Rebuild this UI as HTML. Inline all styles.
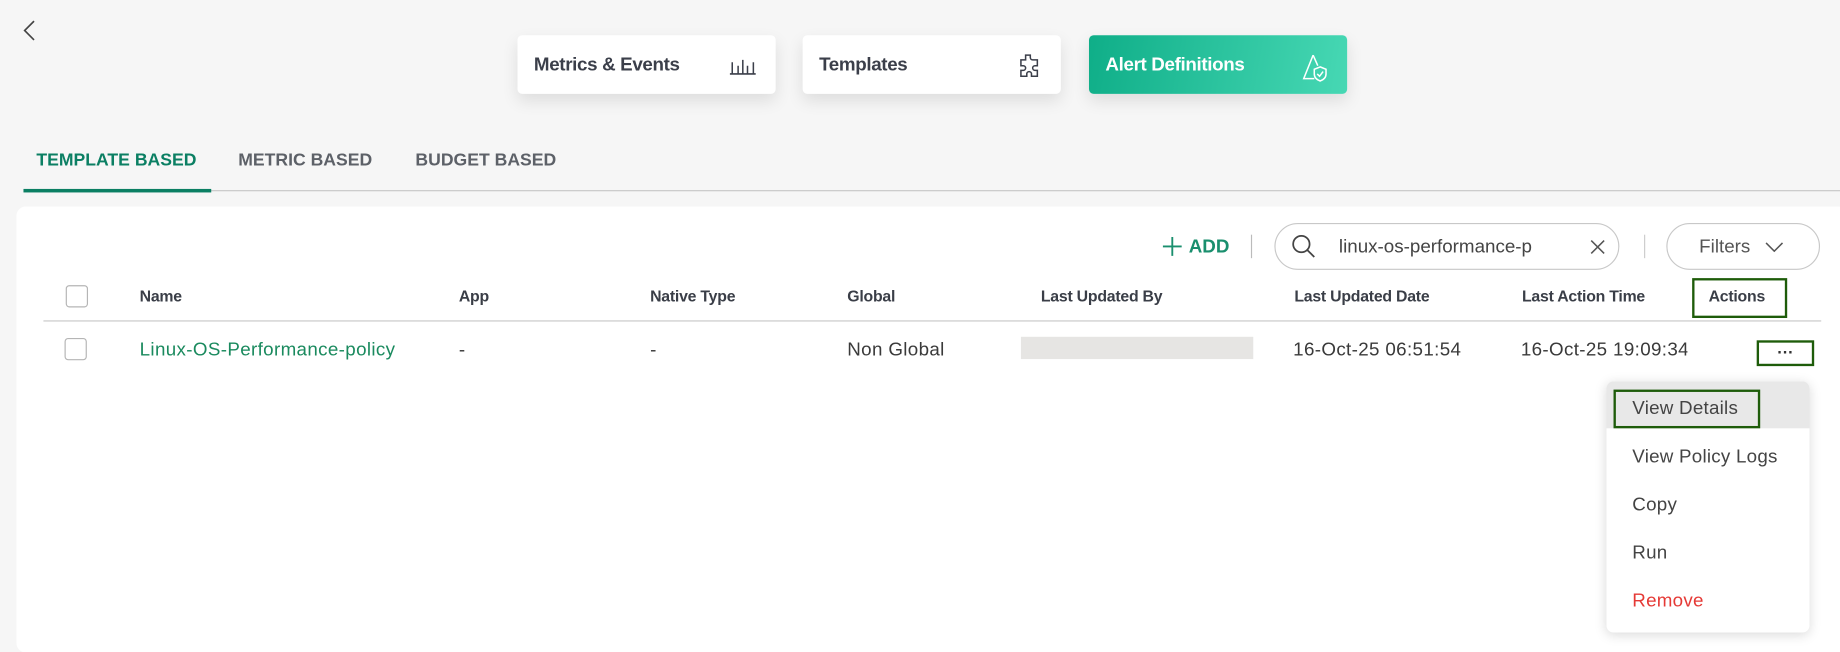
<!DOCTYPE html>
<html><head><meta charset="utf-8"><style>
html,body{margin:0;padding:0;width:1840px;height:641px;overflow:hidden;background:#f6f6f6;font-family:"Liberation Sans",sans-serif;}
#s{position:absolute;left:0;top:0;width:1568px;height:547px;transform:scale(1.17347);transform-origin:0 0;}
.a{position:absolute;white-space:nowrap;}
.card{position:absolute;top:30px;width:220px;height:50px;border-radius:4px;background:#fff;box-shadow:0 6px 14px rgba(0,0,0,.1);}
.card span{position:absolute;left:14px;top:17px;font-size:16px;font-weight:bold;color:#3b3f4a;letter-spacing:-.3px;}
.card svg{position:absolute;right:16px;top:15px;}
.tab{position:absolute;top:128px;font-size:15px;font-weight:bold;color:#5d6168;}
.th{position:absolute;top:245px;font-size:13.5px;font-weight:bold;color:#3a3e47;letter-spacing:-.2px;white-space:nowrap;}
.td{position:absolute;top:290px;font-size:16px;color:#3a3a3a;letter-spacing:.3px;white-space:nowrap;}
.cb{position:absolute;width:17px;height:17px;border:1px solid #b5b5b5;border-radius:3px;background:#fff;}
.mi{position:absolute;left:22px;font-size:16px;color:#444;letter-spacing:.2px;white-space:nowrap;}
</style></head><body><div id="s">
<svg class="a" style="left:19px;top:17px" width="12" height="18" viewBox="0 0 12 18"><path d="M10 1L2 9l8 8" fill="none" stroke="#444" stroke-width="1.4"/></svg>

<div class="card" style="left:441px"><span>Metrics &amp; Events</span>
<svg width="24" height="20" viewBox="0 0 24 20"><path d="M1 18h22M3 18V8M8 18V11M12 18V6M16 18V11M21 18V8" fill="none" stroke="#3b3f4a" stroke-width="1.3"/></svg></div>
<div class="card" style="left:684px"><span>Templates</span>
<svg width="22" height="22" viewBox="0 0 22 22"><path d="M8 2h4v2a2 2 0 0 0 2 2v0h4v5h-2a2 2 0 0 0 0 4h2v5h-5v-2a2 2 0 0 0-4 0v2H4v-5h2a2 2 0 0 0 0-4H4V6h4V2z" fill="none" stroke="#3b3f4a" stroke-width="1.3"/></svg></div>
<div class="card" style="left:928px;background:linear-gradient(100deg,#0fae88,#47d8b4)"><span style="color:#fff">Alert Definitions</span>
<svg width="22" height="26" viewBox="0 0 22 26"><path d="M9 2L1 22h9" fill="none" stroke="#fff" stroke-width="1.3"/><path d="M9 2l4 9" fill="none" stroke="#fff" stroke-width="1.3"/><path d="M15 12l5 2v4c0 3-2 5-5 6-3-1-5-3-5-6v-4z" fill="none" stroke="#fff" stroke-width="1.3"/><path d="M12.5 18l2 2 3-4" fill="none" stroke="#fff" stroke-width="1.3"/></svg></div>

<div class="tab" style="left:31px;color:#0b7f63">TEMPLATE BASED</div>
<div class="tab" style="left:203px">METRIC BASED</div>
<div class="tab" style="left:354px">BUDGET BASED</div>
<div class="a" style="left:20px;top:162px;width:1548px;height:1px;background:#c8c8c8"></div>
<div class="a" style="left:20px;top:161px;width:160px;height:3px;background:#0b7f63"></div>

<div class="a" style="left:14px;top:176px;width:1560px;height:380px;background:#fff;border-radius:8px"></div>

<svg class="a" style="left:990px;top:201px" width="18" height="18" viewBox="0 0 18 18"><path d="M9 1v16M1 9h16" stroke="#1a8f6e" stroke-width="1.6"/></svg>
<div class="a" style="left:1013px;top:202px;font-size:16px;font-weight:bold;color:#1a8f6e">ADD</div>
<div class="a" style="left:1066px;top:200px;width:1px;height:20px;background:#bbb"></div>
<div class="a" style="left:1086px;top:190px;width:294px;height:40px;border:1px solid #c8c8c8;border-radius:21px;box-sizing:border-box"></div>
<svg class="a" style="left:1100px;top:199px" width="22" height="22" viewBox="0 0 22 22"><circle cx="9" cy="9" r="7" fill="none" stroke="#444" stroke-width="1.5"/><path d="M14 14l6 6" stroke="#444" stroke-width="1.5"/></svg>
<div class="a" style="left:1141px;top:202px;font-size:16px;color:#444">linux-os-performance-p</div>
<svg class="a" style="left:1355px;top:204px" width="13" height="13" viewBox="0 0 13 13"><path d="M1 1l11 11M12 1L1 12" stroke="#555" stroke-width="1.3"/></svg>
<div class="a" style="left:1401px;top:200px;width:1px;height:20px;background:#ccc"></div>
<div class="a" style="left:1420px;top:190px;width:131px;height:40px;border:1px solid #c8c8c8;border-radius:21px;box-sizing:border-box"></div>
<div class="a" style="left:1448px;top:202px;font-size:16px;color:#555">Filters</div>
<svg class="a" style="left:1504px;top:206px" width="16" height="9" viewBox="0 0 16 9"><path d="M1 1l7 7 7-7" fill="none" stroke="#555" stroke-width="1.3"/></svg>

<div class="cb" style="left:56px;top:243px"></div>
<div class="th" style="left:119px">Name</div>
<div class="th" style="left:391px">App</div>
<div class="th" style="left:554px">Native Type</div>
<div class="th" style="left:722px">Global</div>
<div class="th" style="left:887px">Last Updated By</div>
<div class="th" style="left:1103px">Last Updated Date</div>
<div class="th" style="left:1297px">Last Action Time</div>
<div class="th" style="left:1456px">Actions</div>
<div class="a" style="left:1442px;top:237px;width:81px;height:34px;border:2px solid #1e5c0a;box-sizing:border-box"></div>
<div class="a" style="left:37px;top:273px;width:1515px;height:1px;background:#c9c9c9"></div>

<div class="cb" style="left:55px;top:288px"></div>
<div class="td" style="left:119px;color:#1a8a5e">Linux-OS-Performance-policy</div>
<div class="td" style="left:391px">-</div>
<div class="td" style="left:554px">-</div>
<div class="td" style="left:722px">Non Global</div>
<div class="a" style="left:870px;top:287px;width:198px;height:19px;background:#e6e5e3"></div>
<div class="td" style="left:1102px">16-Oct-25 06:51:54</div>
<div class="td" style="left:1296px;width:142px;overflow:hidden">16-Oct-25 19:09:34</div>
<div class="a" style="left:1497px;top:290px;width:49px;height:22px;border:2px solid #1e5c0a;box-sizing:border-box;text-align:center;font-size:14px;font-weight:bold;line-height:16px;color:#333">···</div>

<div class="a" style="left:1369px;top:325px;width:173px;height:214px;background:#fff;border-radius:6px;box-shadow:0 2px 10px rgba(0,0,0,.15);overflow:hidden">
<div class="a" style="left:0;top:0;width:173px;height:40px;background:#e8e8e8"></div>
<div class="a" style="left:6px;top:7px;width:125px;height:33px;border:2px solid #1e5c0a;box-sizing:border-box"></div>
<div class="mi" style="top:15px">View Details</div>
<div class="mi" style="top:56px">View Policy Logs</div>
<div class="mi" style="top:97px">Copy</div>
<div class="mi" style="top:138px">Run</div>
<div class="mi" style="top:179px;color:#e53935">Remove</div>
</div>
</div></body></html>
